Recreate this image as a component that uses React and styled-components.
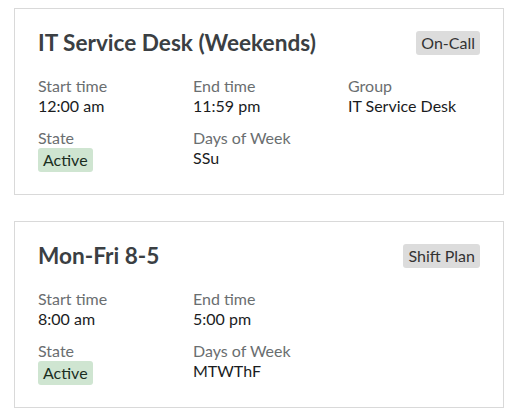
import React from 'react';
import styled, { createGlobalStyle } from 'styled-components';

const GlobalStyle = createGlobalStyle`
  body {
    margin: 0;
    background: #ffffff;
    font-family: Lato, "Noto Sans", sans-serif;
  }
`;

const Page = styled.div`
  display: flex;
  flex-direction: column;
  gap: 26px;
  padding: 8px 11px 0 14px;
`;

const Card = styled.section`
  border: 1px solid #d9d9d9;
  padding: 20px 23px 22px 23px;
`;

const Header = styled.div`
  display: flex;
  justify-content: space-between;
  align-items: center;
  margin-bottom: 20px;
`;

const Title = styled.h2`
  margin: 0;
  font-size: 22.6px;
  font-weight: 700;
  color: #3b3f43;
`;

const Tag = styled.span`
  background: ${props => (props.$kind === 'active' ? '#cfe5d1' : '#dcdcdc')};
  color: ${props => (props.$kind === 'active' ? '#1b2e1f' : '#333')};
  border-radius: 3px;
  padding: 3px 5px;
  font-size: 16px;
  line-height: 18px;
  display: inline-block;
`;

const Fields = styled.div`
  display: grid;
  grid-template-columns: 155px 155px 1fr;
  row-gap: 12px;
`;

const Field = styled.div`
  display: flex;
  flex-direction: column;
  align-items: flex-start;
`;

const Label = styled.span`
  font-size: 16px;
  line-height: 20px;
  color: #6a6e70;
`;

const Value = styled.span`
  font-size: 16px;
  line-height: 20px;
  color: #1a1c1e;
`;

const schedules = [
  {
    title: 'IT Service Desk (Weekends)',
    type: 'On-Call',
    fields: [
      ['Start time', '12:00 am'],
      ['End time', '11:59 pm'],
      ['Group', 'IT Service Desk'],
      ['State', 'Active'],
      ['Days of Week', 'SSu'],
    ],
  },
  {
    title: 'Mon-Fri 8-5',
    type: 'Shift Plan',
    fields: [
      ['Start time', '8:00 am'],
      ['End time', '5:00 pm'],
      null,
      ['State', 'Active'],
      ['Days of Week', 'MTWThF'],
    ],
  },
];

export default function App() {
  return (
    <>
      <GlobalStyle />
      <Page>
        {schedules.map(s => (
          <Card key={s.title}>
            <Header>
              <Title>{s.title}</Title>
              <Tag>{s.type}</Tag>
            </Header>
            <Fields>
              {s.fields.map((f, i) =>
                f ? (
                  <Field key={i}>
                    <Label>{f[0]}</Label>
                    {f[0] === 'State' ? (
                      <Tag $kind="active">{f[1]}</Tag>
                    ) : (
                      <Value>{f[1]}</Value>
                    )}
                  </Field>
                ) : (
                  <div key={i} />
                )
              )}
            </Fields>
          </Card>
        ))}
      </Page>
    </>
  );
}
